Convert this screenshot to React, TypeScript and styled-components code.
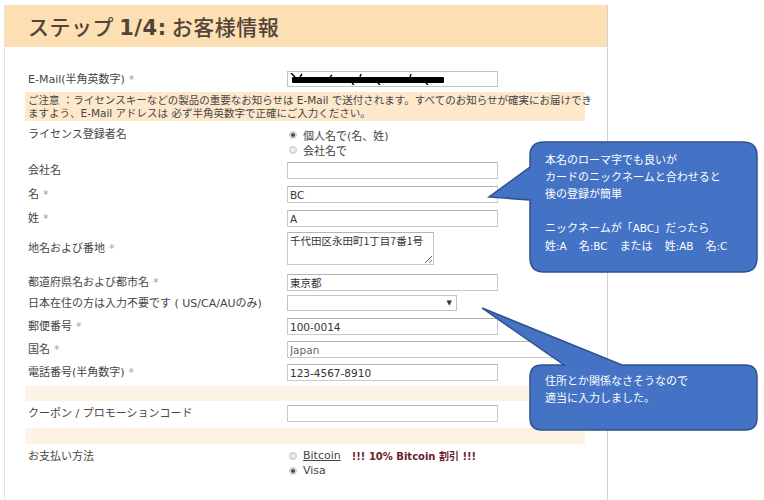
import React from 'react';
import styled, { createGlobalStyle } from 'styled-components';

const GlobalStyle = createGlobalStyle`
  body {
    margin: 0;
    background: #ffffff;
    font-family: "DejaVu Sans", "Noto Sans CJK JP", sans-serif;
  }
`;

const Page = styled.div`
  position: relative;
  width: 764px;
  height: 500px;
  overflow: hidden;
`;

const Card = styled.div`
  margin: 5px 0 0 4px;
  width: 604px;
  min-height: 495px;
  box-sizing: border-box;
  border-left: 1px solid #e8e4de;
  border-right: 1px solid #d2d2d2;
`;

const Header = styled.div`
  height: 42px;
  background: #fddfb4;
  display: flex;
  align-items: center;
  padding-left: 23px;
`;

const Title = styled.h1`
  margin: 0;
  font-family: "Noto Sans CJK JP", sans-serif;
  font-size: 21px;
  font-weight: 500;
  color: #524438;
  letter-spacing: 0.5px;

  b {
    font-family: "DejaVu Sans", sans-serif;
    font-weight: 700;
  }
`;

const Body = styled.div`
  padding: 24px 0 20px 20px;
`;

const Row = styled.div<{ $gap: number; $top?: boolean }>`
  display: flex;
  align-items: ${p => (p.$top ? 'flex-start' : 'center')};
  margin-top: ${p => p.$gap}px;
  width: 560px;
`;

const Label = styled.div<{ $pad?: number }>`
  width: 262px;
  flex-shrink: 0;
  box-sizing: border-box;
  padding-left: 3px;
  padding-top: ${p => p.$pad || 0}px;
  font-size: 11px;
  line-height: 13px;
  color: #464646;
  white-space: nowrap;
`;

const Star = styled.span`
  color: #a0a0a0;
  margin-left: 4px;
`;

const TextInput = styled.input<{ $width?: number; $muted?: boolean }>`
  width: ${p => p.$width || 211}px;
  height: 17px;
  box-sizing: border-box;
  border: 1px solid #c9c9c9;
  border-top-color: #b4b4b4;
  padding: 0 2px;
  font-family: "DejaVu Sans", "Noto Sans CJK JP", sans-serif;
  font-size: 10.5px;
  color: ${p => (p.$muted ? '#666' : '#333')};
  background: #fff;
  outline: none;
`;

const EmailBox = styled.div`
  width: 211px;
  height: 16px;
  box-sizing: border-box;
  border: 1px solid #c4c4c4;
  display: flex;
  align-items: center;
  padding-left: 2px;
`;

const Area = styled.textarea`
  width: 147px;
  height: 33px;
  box-sizing: border-box;
  border: 1px solid #c9c9c9;
  border-top-color: #b4b4b4;
  padding: 1px 2px;
  font-family: "Noto Sans CJK JP", sans-serif;
  font-size: 10.5px;
  line-height: 14px;
  color: #333;
  outline: none;
`;

const SelectBox = styled.div`
  width: 170px;
  height: 16px;
  box-sizing: border-box;
  border: 1px solid #c4c4c4;
  display: flex;
  align-items: center;
  justify-content: flex-end;
  padding-right: 4px;
  font-size: 7px;
  color: #333;
`;

const Notice = styled.div`
  margin-top: 5px;
  width: 560px;
  height: 29px;
  box-sizing: border-box;
  background: #fde8cc;
  padding: 2px 3px;
  font-size: 10.5px;
  line-height: 13px;
  color: #464646;
  white-space: nowrap;
`;

const Band = styled.div<{ $gap: number; $h: number }>`
  margin-top: ${p => p.$gap}px;
  height: ${p => p.$h}px;
  width: 560px;
  background: #fdf2e4;
`;

const Options = styled.div`
  display: flex;
  flex-direction: column;
  padding-left: 2px;
`;

const Option = styled.div`
  display: flex;
  align-items: center;
  height: 15px;
  font-size: 11px;
  color: #444;
  white-space: nowrap;
`;

const Radio = styled.span<{ $on?: boolean }>`
  width: 8px;
  height: 8px;
  border-radius: 50%;
  box-sizing: border-box;
  border: 1px solid #c6c6c6;
  background: ${p =>
    p.$on
      ? 'radial-gradient(circle, #555 0 1.6px, #d8d8d8 2.2px)'
      : 'radial-gradient(circle, #f4f4f4, #dadada)'};
  margin-right: 6px;
  flex-shrink: 0;
`;

const Link = styled.span`
  text-decoration: underline;
  color: #444;
`;

const Promo = styled.span`
  margin-left: 11px;
  font-weight: 700;
  color: #6a1e2c;
  font-size: 10px;
`;

const Callout = styled.div<{ $x: number; $y: number; $w: number; $h: number }>`
  position: absolute;
  left: ${p => p.$x}px;
  top: ${p => p.$y}px;
  width: ${p => p.$w}px;
  height: ${p => p.$h}px;
`;

const Shape = styled.svg`
  position: absolute;
  left: 0;
  top: 0;
`;

const CalloutText = styled.div<{ $x: number; $y: number }>`
  position: relative;
  padding: ${p => p.$y}px 0 0 ${p => p.$x}px;
  font-family: "Noto Sans CJK JP", sans-serif;
  font-size: 11px;
  line-height: 17px;
  color: #ffffff;
  white-space: nowrap;
`;

const Latin = styled.span`
  font-family: "DejaVu Sans", sans-serif;
  font-size: 10.5px;
`;

const Gap = styled.span`
  display: inline-block;
  width: 12px;
`;

const Redacted = () => (
  <svg width="160" height="12" viewBox="0 0 160 12">
    <path d="M1 0 L5 4" stroke="#000" strokeWidth="1.5" />
    <rect x="2" y="4" width="152" height="6" rx="1" fill="#000" />
    <path
      d="M10 4 L12 1 M40 4 L42 2 M62 10 L64 12 M70 4 L71 1 M88 10 L90 12 M120 4 L121 1 M136 10 L138 12"
      stroke="#000"
      strokeWidth="1.4"
    />
  </svg>
);

const App: React.FC = () => {
  return (
    <Page>
      <GlobalStyle />
      <Card>
        <Header>
          <Title>
            ステップ <b>1/4:</b> お客様情報
          </Title>
        </Header>
        <Body>
          <Row $gap={0}>
            <Label>
              E-Mail(半角英数字)<Star>*</Star>
            </Label>
            <EmailBox>
              <Redacted />
            </EmailBox>
          </Row>
          <Notice>
            ご注意 ：ライセンスキーなどの製品の重要なお知らせは E-Mail で送付されます。すべてのお知らせが確実にお届けでき
            <br />
            ますよう、E-Mail アドレスは 必ず半角英数字で正確にご入力ください。
          </Notice>
          <Row $gap={6} $top>
            <Label $pad={1}>ライセンス登録者名</Label>
            <Options>
              <Option>
                <Radio $on />
                個人名で(名、姓)
              </Option>
              <Option>
                <Radio />
                会社名で
              </Option>
            </Options>
          </Row>
          <Row $gap={5}>
            <Label>会社名</Label>
            <TextInput readOnly defaultValue="" />
          </Row>
          <Row $gap={7}>
            <Label>
              名<Star>*</Star>
            </Label>
            <TextInput readOnly defaultValue="BC" />
          </Row>
          <Row $gap={7}>
            <Label>
              姓<Star>*</Star>
            </Label>
            <TextInput readOnly defaultValue="A" />
          </Row>
          <Row $gap={5}>
            <Label>
              地名および番地<Star>*</Star>
            </Label>
            <Area readOnly defaultValue="千代田区永田町1丁目7番1号" />
          </Row>
          <Row $gap={9}>
            <Label>
              都道府県名および都市名<Star>*</Star>
            </Label>
            <TextInput readOnly defaultValue="東京都" />
          </Row>
          <Row $gap={4}>
            <Label>日本在住の方は入力不要です ( US/CA/AUのみ)</Label>
            <SelectBox>▼</SelectBox>
          </Row>
          <Row $gap={7}>
            <Label>
              郵便番号<Star>*</Star>
            </Label>
            <TextInput readOnly defaultValue="100-0014" />
          </Row>
          <Row $gap={6}>
            <Label>
              国名<Star>*</Star>
            </Label>
            <TextInput readOnly defaultValue="Japan" $width={275} $muted />
          </Row>
          <Row $gap={6}>
            <Label>
              電話番号(半角数字)<Star>*</Star>
            </Label>
            <TextInput readOnly defaultValue="123-4567-8910" />
          </Row>
          <Band $gap={5} $h={15} />
          <Row $gap={4}>
            <Label>クーポン / プロモーションコード</Label>
            <TextInput readOnly defaultValue="" />
          </Row>
          <Band $gap={6} $h={16} />
          <Row $gap={4} $top>
            <Label $pad={2}>お支払い方法</Label>
            <Options>
              <Option>
                <Radio />
                <Link>Bitcoin</Link>
                <Promo>!!! 10% Bitcoin 割引 !!!</Promo>
              </Option>
              <Option>
                <Radio $on />
                Visa
              </Option>
            </Options>
          </Row>
        </Body>
      </Card>

      <Callout $x={485} $y={140} $w={275} $h={136}>
        <Shape width="275" height="136" viewBox="0 0 275 136">
          <path
            d="M59 2 H258 Q272 2 272 16 V118 Q272 132 258 132 H59 Q45 132 45 118 V60 L4 57 L45 27 V16 Q45 2 59 2 Z"
            fill="#4472c4"
            stroke="#2f528f"
            strokeWidth="1.5"
          />
        </Shape>
        <CalloutText $x={60} $y={11}>
          本名のローマ字でも良いが
          <br />
          カードのニックネームと合わせると
          <br />
          後の登録が簡単
          <br />
          <br />
          ニックネームが「<Latin>ABC</Latin>」だったら
          <br />
          姓<Latin>:A</Latin>
          <Gap />名<Latin>:BC</Latin>
          <Gap />または<Gap />姓<Latin>:AB</Latin>
          <Gap />名<Latin>:C</Latin>
        </CalloutText>
      </Callout>

      <Callout $x={476} $y={303} $w={284} $h={130}>
        <Shape width="284" height="130" viewBox="0 0 284 130">
          <path
            d="M66 62 H88 L6 5 L146 62 H269 Q281 62 281 74 V115 Q281 127 269 127 H66 Q54 127 54 115 V74 Q54 62 66 62 Z"
            fill="#4472c4"
            stroke="#2f528f"
            strokeWidth="1.5"
          />
        </Shape>
        <CalloutText $x={69} $y={69}>
          住所とか関係なさそうなので
          <br />
          適当に入力しました。
        </CalloutText>
      </Callout>
    </Page>
  );
};

export default App;
